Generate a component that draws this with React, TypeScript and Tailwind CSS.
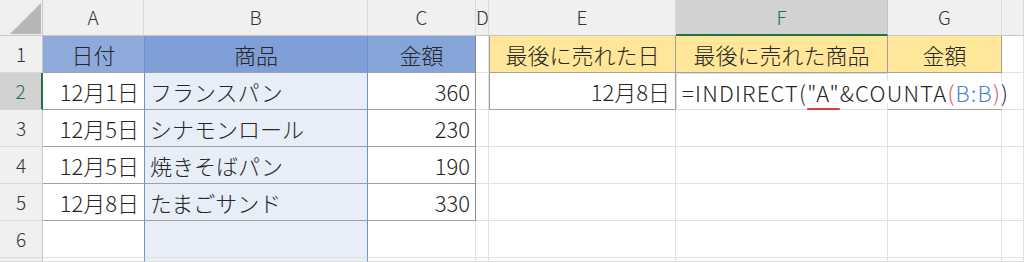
import React from 'react';

type Align = 'left' | 'center' | 'right';

interface CellProps {
  children?: React.ReactNode;
  align?: Align;
  className?: string;
}

const alignClass: Record<Align, string> = {
  left: 'justify-start pl-[5px]',
  center: 'justify-center',
  right: 'justify-end pr-[5px]',
};

// a single sheet cell; borders/fill come in through className
const Cell: React.FC<CellProps> = ({ children, align = 'left', className = '' }) => (
  <div
    className={`flex items-center whitespace-nowrap text-[22px] leading-none text-[#262626] border-r border-b border-[#e1e1e1] ${alignClass[align]} ${className}`}
  >
    {children}
  </div>
);

const ColHead: React.FC<{ label?: string; active?: boolean; className?: string }> = ({ label, active, className = '' }) => (
  <div
    className={`flex items-center justify-center text-[19px] border-r border-b ${
      active
        ? 'bg-[#d2d2d2] text-[#217346] border-r-[#c6c6c6] border-b-2 border-b-[#217346]'
        : 'bg-[#f0f0f0] text-[#333] border-r-[#dadada] border-b-[#c6c6c6]'
    } ${className}`}
  >
    {label}
  </div>
);

const RowHead: React.FC<{ n?: number; active?: boolean }> = ({ n, active }) => (
  <div
    className={`flex items-center justify-center text-[19px] border-b ${
      active
        ? 'bg-[#d2d2d2] text-[#217346] border-b-[#d4d4d4] border-r-2 border-r-[#217346]'
        : 'bg-[#f0f0f0] text-[#333] border-b-[#d8d8d8] border-r border-r-[#c6c6c6]'
    }`}
  >
    {n}
  </div>
);

const sales = [
  { date: '12月1日', item: 'フランスパン', price: 360 },
  { date: '12月5日', item: 'シナモンロール', price: 230 },
  { date: '12月5日', item: '焼きそばパン', price: 190 },
  { date: '12月8日', item: 'たまごサンド', price: 330 },
];

// column B is the range referenced by the formula being edited
const refCol = 'bg-[#e8eef8] border-l border-l-[#6e93d1] border-r-[#6e93d1]';
const tableLine = 'border-b-[#a0a0a0]';

export default function App() {
  return (
    <div className="w-[1024px] h-[262px] overflow-hidden bg-white font-light font-['Noto_Sans_CJK_JP','Noto_Sans',sans-serif]">
      <div className="grid grid-cols-[43px_101px_224px_108px_13px_187px_212px_114px_1fr] grid-rows-[36px_repeat(6,37px)_1fr] h-full">
        {/* header row */}
        <div className="relative bg-[#f0f0f0] border-r border-b border-r-[#c6c6c6] border-b-[#c6c6c6]">
          <svg className="absolute left-0 top-0" width="43" height="36" viewBox="0 0 43 36">
            <polygon points="10,34 41,34 41,3" fill="#b6b6b6" />
          </svg>
        </div>
        <ColHead label="A" />
        <ColHead label="B" />
        <ColHead label="C" />
        <ColHead label="D" className="justify-start" />
        <ColHead label="E" />
        <ColHead label="F" active />
        <ColHead label="G" />
        <ColHead />

        {/* row 1 */}
        <RowHead n={1} />
        <Cell align="center" className={`bg-[#8eaadb] ${tableLine} border-r-0`}>日付</Cell>
        <Cell align="center" className={`bg-[#7f9fd6] border-l border-l-[#6e93d1] border-r-[#6e93d1] ${tableLine}`}>商品</Cell>
        <Cell align="center" className={`bg-[#85a4d8] ${tableLine} border-r-[#8c8c8c]`}>金額</Cell>
        <Cell />
        <Cell align="center" className="bg-[#ffe699] border-l border-l-[#a0a0a0] border-r-[#a0a0a0] border-b-[#a0a0a0]">最後に売れた日</Cell>
        <Cell align="center" className="bg-[#ffe699] border-r-[#a0a0a0] border-b-[#a0a0a0]">最後に売れた商品</Cell>
        <Cell align="center" className="bg-[#ffe699] border-r-[#a0a0a0] border-b-[#a0a0a0]">金額</Cell>
        <Cell />

        {/* row 2 with the formula being typed in F2 */}
        <RowHead n={2} active />
        <Cell align="right" className={`${tableLine} border-r-0`}>{sales[0].date}</Cell>
        <Cell className={`${refCol} ${tableLine}`}>{sales[0].item}</Cell>
        <Cell align="right" className={`${tableLine} border-r-[#8c8c8c]`}>{sales[0].price}</Cell>
        <Cell />
        <Cell align="right" className="border-l border-l-[#a0a0a0] border-r-[#a0a0a0] border-b-[#a0a0a0]">12月8日</Cell>
        <Cell className="relative z-10 border border-[#217346] pl-[4px] overflow-visible">
          <span className="bg-white tracking-[1.2px]">
            =INDIRECT(<span className="underline decoration-[#e03b3b] decoration-2 underline-offset-[6px]">"A"</span>&amp;COUNTA
            <span className="text-[#e0505a]">(</span>
            <span className="text-[#4a7fd4]">B:B</span>
            <span className="text-[#e0505a]">)</span>)
          </span>
        </Cell>
        <Cell className="border-b-[#a0a0a0]" />
        <Cell />

        {/* rows 3–5 */}
        {sales.slice(1).map((s, i) => (
          <React.Fragment key={i}>
            <RowHead n={i + 3} />
            <Cell align="right" className={`${tableLine} border-r-0`}>{s.date}</Cell>
            <Cell className={`${refCol} ${tableLine}`}>{s.item}</Cell>
            <Cell align="right" className={`${tableLine} border-r-[#8c8c8c]`}>{s.price}</Cell>
            <Cell />
            <Cell />
            <Cell />
            <Cell />
            <Cell />
          </React.Fragment>
        ))}

        {/* row 6 */}
        <RowHead n={6} />
        <Cell className="border-r-0" />
        <Cell className={refCol} />
        <Cell />
        <Cell />
        <Cell />
        <Cell />
        <Cell />
        <Cell />

        {/* row 7, cut off */}
        <RowHead />
        <Cell className="border-r-0" />
        <Cell className={refCol} />
        <Cell />
        <Cell />
        <Cell />
        <Cell />
        <Cell />
        <Cell />
      </div>
    </div>
  );
}
